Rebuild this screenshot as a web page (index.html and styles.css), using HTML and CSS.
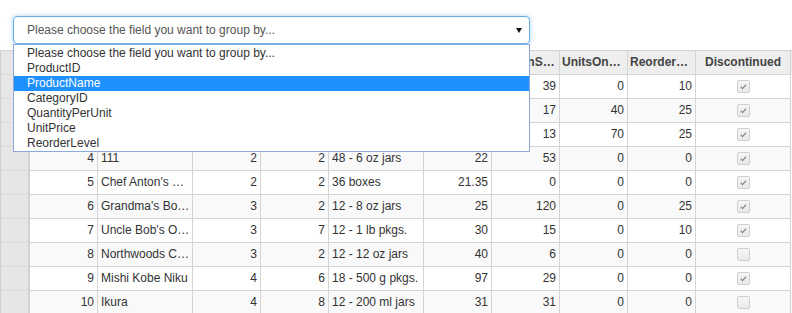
FILE: index.html
```html
<!DOCTYPE html>
<html lang="en">
<head>
<meta charset="utf-8">
<title>Group by</title>
<link rel="stylesheet" href="styles.css">
</head>
<body>
<div class="page">
  <div class="group-select">
    <div class="select">
      <span class="select-text">Please choose the field you want to group by...</span>
      <span class="arrow"></span>
    </div>
    <ul class="listbox">
      <li class="opt">Please choose the field you want to group by...</li>
      <li class="opt">ProductID</li>
      <li class="opt selected">ProductName</li>
      <li class="opt">CategoryID</li>
      <li class="opt">QuantityPerUnit</li>
      <li class="opt">UnitPrice</li>
      <li class="opt">ReorderLevel</li>
    </ul>
  </div>

  <div class="grid">
    <div class="row head">
      <div class="cell rh"></div>
      <div class="cell">ProductID</div>
      <div class="cell">ProductName</div>
      <div class="cell">SupplierID</div>
      <div class="cell">CategoryID</div>
      <div class="cell">QuantityPerUnit</div>
      <div class="cell">UnitPrice</div>
      <div class="cell">UnitsInStock</div>
      <div class="cell">UnitsOnOrder</div>
      <div class="cell">ReorderLevel</div>
      <div class="cell">Discontinued</div>
    </div>

    <div class="row">
      <div class="cell rh"></div>
      <div class="cell num">1</div><div class="cell">Chai</div><div class="cell num">1</div><div class="cell num">1</div>
      <div class="cell">10 boxes x 20 bags</div><div class="cell num">18</div><div class="cell num">39</div><div class="cell num">0</div><div class="cell num">10</div>
      <div class="cell chk"><span class="cb on"><svg viewBox="0 0 13 13"><path d="M3.2 6.8 L5.4 8.9 L9.6 4.2"/></svg></span></div>
    </div>
    <div class="row alt">
      <div class="cell rh"></div>
      <div class="cell num">2</div><div class="cell">Chang</div><div class="cell num">1</div><div class="cell num">1</div>
      <div class="cell">24 - 12 oz bottles</div><div class="cell num">19</div><div class="cell num">17</div><div class="cell num">40</div><div class="cell num">25</div>
      <div class="cell chk"><span class="cb on"><svg viewBox="0 0 13 13"><path d="M3.2 6.8 L5.4 8.9 L9.6 4.2"/></svg></span></div>
    </div>
    <div class="row">
      <div class="cell rh"></div>
      <div class="cell num">3</div><div class="cell">Aniseed Syrup</div><div class="cell num">1</div><div class="cell num">2</div>
      <div class="cell">12 - 550 ml bottles</div><div class="cell num">10</div><div class="cell num">13</div><div class="cell num">70</div><div class="cell num">25</div>
      <div class="cell chk"><span class="cb on"><svg viewBox="0 0 13 13"><path d="M3.2 6.8 L5.4 8.9 L9.6 4.2"/></svg></span></div>
    </div>
    <div class="row alt">
      <div class="cell rh"></div>
      <div class="cell num">4</div><div class="cell">111</div><div class="cell num">2</div><div class="cell num">2</div>
      <div class="cell">48 - 6 oz jars</div><div class="cell num">22</div><div class="cell num">53</div><div class="cell num">0</div><div class="cell num">0</div>
      <div class="cell chk"><span class="cb on"><svg viewBox="0 0 13 13"><path d="M3.2 6.8 L5.4 8.9 L9.6 4.2"/></svg></span></div>
    </div>
    <div class="row">
      <div class="cell rh"></div>
      <div class="cell num">5</div><div class="cell">Chef Anton's Cajun Seasoning</div><div class="cell num">2</div><div class="cell num">2</div>
      <div class="cell">36 boxes</div><div class="cell num">21.35</div><div class="cell num">0</div><div class="cell num">0</div><div class="cell num">0</div>
      <div class="cell chk"><span class="cb on"><svg viewBox="0 0 13 13"><path d="M3.2 6.8 L5.4 8.9 L9.6 4.2"/></svg></span></div>
    </div>
    <div class="row alt">
      <div class="cell rh"></div>
      <div class="cell num">6</div><div class="cell">Grandma's Boysenberry Spread</div><div class="cell num">3</div><div class="cell num">2</div>
      <div class="cell">12 - 8 oz jars</div><div class="cell num">25</div><div class="cell num">120</div><div class="cell num">0</div><div class="cell num">25</div>
      <div class="cell chk"><span class="cb on"><svg viewBox="0 0 13 13"><path d="M3.2 6.8 L5.4 8.9 L9.6 4.2"/></svg></span></div>
    </div>
    <div class="row">
      <div class="cell rh"></div>
      <div class="cell num">7</div><div class="cell">Uncle Bob's Organic Dried Pears</div><div class="cell num">3</div><div class="cell num">7</div>
      <div class="cell">12 - 1 lb pkgs.</div><div class="cell num">30</div><div class="cell num">15</div><div class="cell num">0</div><div class="cell num">10</div>
      <div class="cell chk"><span class="cb on"><svg viewBox="0 0 13 13"><path d="M3.2 6.8 L5.4 8.9 L9.6 4.2"/></svg></span></div>
    </div>
    <div class="row alt">
      <div class="cell rh"></div>
      <div class="cell num">8</div><div class="cell">Northwoods Cranberry Sauce</div><div class="cell num">3</div><div class="cell num">2</div>
      <div class="cell">12 - 12 oz jars</div><div class="cell num">40</div><div class="cell num">6</div><div class="cell num">0</div><div class="cell num">0</div>
      <div class="cell chk"><span class="cb"></span></div>
    </div>
    <div class="row">
      <div class="cell rh"></div>
      <div class="cell num">9</div><div class="cell">Mishi Kobe Niku</div><div class="cell num">4</div><div class="cell num">6</div>
      <div class="cell">18 - 500 g pkgs.</div><div class="cell num">97</div><div class="cell num">29</div><div class="cell num">0</div><div class="cell num">0</div>
      <div class="cell chk"><span class="cb on"><svg viewBox="0 0 13 13"><path d="M3.2 6.8 L5.4 8.9 L9.6 4.2"/></svg></span></div>
    </div>
    <div class="row alt">
      <div class="cell rh"></div>
      <div class="cell num">10</div><div class="cell">Ikura</div><div class="cell num">4</div><div class="cell num">8</div>
      <div class="cell">12 - 200 ml jars</div><div class="cell num">31</div><div class="cell num">31</div><div class="cell num">0</div><div class="cell num">0</div>
      <div class="cell chk"><span class="cb"></span></div>
    </div>
  </div>
</div>
</body>
</html>
```

FILE: styles.css
```css
* { box-sizing: border-box; }

html, body {
  margin: 0;
  padding: 0;
  background: #fff;
}

body {
  font-family: "Liberation Sans", Arial, sans-serif;
  font-size: 12px;
  color: #333;
}

.page {
  width: 792px;
  overflow: hidden;
}

/* ---------- select ---------- */
.group-select {
  position: relative;
  width: 517px;
  margin: 16px 0 6px 13px;
  z-index: 5;
}

.select {
  display: flex;
  align-items: center;
  justify-content: space-between;
  height: 28px;
  padding: 0 7px 0 13px;
  border: 1px solid #66afe9;
  border-radius: 4px;
  background: #fff;
  color: #555;
  box-shadow: inset 0 1px 1px rgba(0, 0, 0, 0.05), 0 0 5px rgba(102, 175, 233, 0.55);
}

.select-text {
  line-height: 26px;
}

.arrow {
  width: 0;
  height: 0;
  border-left: 3px solid transparent;
  border-right: 3px solid transparent;
  border-top: 5px solid #111;
  margin-top: 1px;
}

.listbox {
  position: absolute;
  left: 0;
  top: 28px;
  width: 517px;
  margin: 0;
  padding: 1px 0 0;
  list-style: none;
  background: #fff;
  border: 1px solid #8aa8d8;
}

.opt {
  height: 15px;
  line-height: 15px;
  padding-left: 13px;
  color: #333;
  white-space: nowrap;
}

.opt.selected {
  background: #1e90ff;
  color: #fff;
}

/* ---------- grid ---------- */
.grid {
  width: 792px;
  border-left: 1px solid #d0d0d0;
  border-top: 1px solid #d4d4d4;
}

.row {
  display: grid;
  grid-template-columns: 29px 68px 95px 68px 68px 95px 68px 68px 68px 68px 95px;
  height: 24px;
  background: #fff;
}

.row.alt {
  background: #f9f9f9;
}

.cell {
  height: 24px;
  line-height: 23px;
  padding: 0 2px 0 3px;
  border-right: 1px solid #d4d4d4;
  border-bottom: 1px solid #d4d4d4;
  white-space: nowrap;
  overflow: hidden;
  text-overflow: ellipsis;
  color: #333;
}

.cell.num {
  text-align: right;
  padding: 0 3px;
}

.cell.rh {
  background: #e6e6e6;
  border-right: 2px solid #d2d2d2;
  border-bottom-color: #dadada;
}

.row.head {
  background: #eee;
}

.row.head .cell {
  font-weight: bold;
  color: #444;
  text-align: center;
  padding: 0 2px;
}

.cell.chk {
  display: flex;
  align-items: center;
  justify-content: center;
}

.cb {
  display: block;
  width: 13px;
  height: 13px;
  border: 1px solid #cfcfcf;
  border-radius: 2px;
  background: linear-gradient(#f6f6f6, #e9e9e9);
}

.cb svg {
  display: block;
  width: 11px;
  height: 11px;
}

.cb svg path {
  fill: none;
  stroke: #8c8c8c;
  stroke-width: 1.5;
}
```
